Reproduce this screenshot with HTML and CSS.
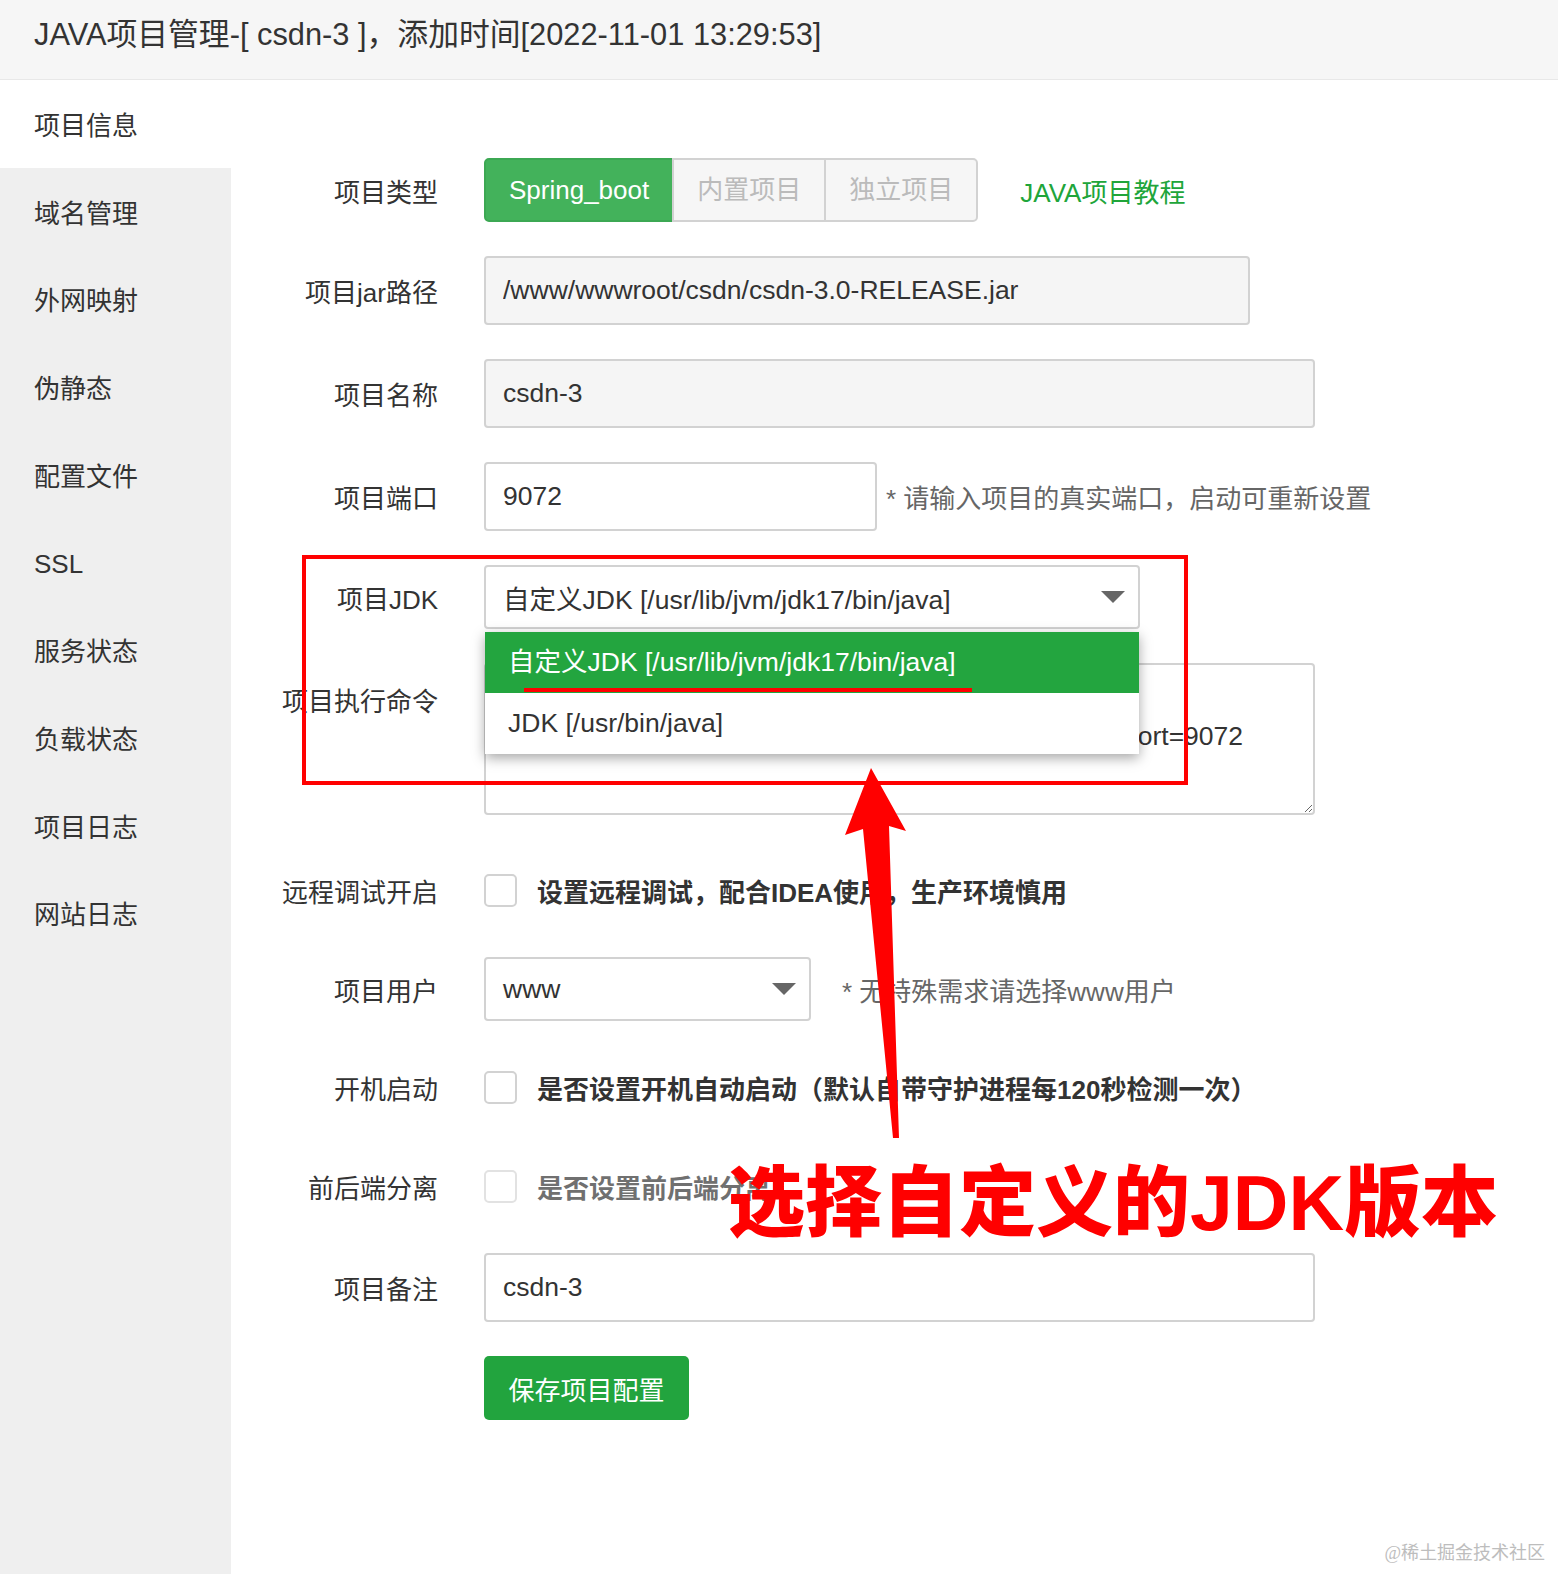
FILE: index.html
```html
<!DOCTYPE html>
<html lang="zh-CN">
<head>
    <meta charset="UTF-8">
    <meta name="viewport" content="width=device-width, initial-scale=1.0">
    <title>JAVA项目管理</title>
    <link rel="stylesheet" href="styles.css">
</head>
<body>
<div class="page">
    <div class="header">JAVA项目管理-[ csdn-3 ]，添加时间[2022-11-01 13:29:53]</div>

    <div class="layout">
        <ul class="sidebar">
            <li class="active">项目信息</li>
            <li>域名管理</li>
            <li>外网映射</li>
            <li>伪静态</li>
            <li>配置文件</li>
            <li>SSL</li>
            <li>服务状态</li>
            <li>负载状态</li>
            <li>项目日志</li>
            <li>网站日志</li>
        </ul>

        <div class="main">
            <div class="row">
                <span class="row-label">项目类型</span>
                <div class="btn-group">
                    <span class="type-btn active">Spring_boot</span>
                    <span class="type-btn">内置项目</span>
                    <span class="type-btn">独立项目</span>
                </div>
                <a class="tutorial" href="#">JAVA项目教程</a>
            </div>

            <div class="row">
                <span class="row-label">项目jar路径</span>
                <input class="text-input readonly jar-input" type="text" value="/www/wwwroot/csdn/csdn-3.0-RELEASE.jar" readonly>
            </div>

            <div class="row">
                <span class="row-label">项目名称</span>
                <input class="text-input readonly wide-input" type="text" value="csdn-3" readonly>
            </div>

            <div class="row">
                <span class="row-label">项目端口</span>
                <input class="text-input port-input" type="text" value="9072">
                <span class="hint port-hint">* 请输入项目的真实端口，启动可重新设置</span>
            </div>

            <div class="row">
                <span class="row-label">项目JDK</span>
                <div class="select jdk-select">
                    <span>自定义JDK [/usr/lib/jvm/jdk17/bin/java]</span>
                    <svg class="caret" width="24" height="12" viewBox="0 0 24 12"><path d="M0 0h24L12 12z" fill="#666"/></svg>
                    <ul class="select-menu">
                        <li class="selected">自定义JDK [/usr/lib/jvm/jdk17/bin/java]</li>
                        <li>JDK [/usr/bin/java]</li>
                    </ul>
                </div>
            </div>

            <div class="row row-top">
                <span class="row-label">项目执行命令</span>
                <textarea class="cmd-input">/usr/lib/jvm/jdk17/bin/java -jar -Xmx1024M -Xms256M /www/wwwroot/csdn/csdn-3.0-RELEASE.jar --server.port=9072</textarea>
            </div>

            <div class="row check-row">
                <span class="row-label">远程调试开启</span>
                <span class="checkbox"></span>
                <span class="check-text">设置远程调试，配合IDEA使用，生产环境慎用</span>
            </div>

            <div class="row">
                <span class="row-label">项目用户</span>
                <div class="select user-select">
                    <span>www</span>
                    <svg class="caret" width="24" height="12" viewBox="0 0 24 12"><path d="M0 0h24L12 12z" fill="#666"/></svg>
                </div>
                <span class="hint user-hint">* 无特殊需求请选择www用户</span>
            </div>

            <div class="row check-row">
                <span class="row-label">开机启动</span>
                <span class="checkbox"></span>
                <span class="check-text">是否设置开机自动启动（默认自带守护进程每120秒检测一次）</span>
            </div>

            <div class="row check-row">
                <span class="row-label">前后端分离</span>
                <span class="checkbox disabled"></span>
                <span class="check-text disabled">是否设置前后端分离</span>
            </div>

            <div class="row">
                <span class="row-label">项目备注</span>
                <input class="text-input wide-input" type="text" value="csdn-3">
            </div>

            <div class="row">
                <span class="row-label"></span>
                <button class="save-btn" type="button">保存项目配置</button>
            </div>
        </div>
    </div>

    <!-- screenshot annotations -->
    <svg class="annotations" width="1558" height="1574" viewBox="0 0 1558 1574">
        <rect x="304" y="557" width="882" height="226" fill="none" stroke="#ff0000" stroke-width="4"/>
        <rect x="524" y="688" width="448" height="4" fill="#ff0000"/>
        <polygon points="871,768 906,831 889,826 899,1138 893,1138 863,829 845,835" fill="#ff0000"/>
    </svg>
    <div class="callout">选择自定义的JDK版本</div>
    <div class="watermark">@稀土掘金技术社区</div>
</div>
</body>
</html>
```

FILE: styles.css
```css
body {
    margin: 0;
    font-family: "Liberation Sans", "Noto Sans CJK SC", sans-serif;
    color: #333;
    background-color: #fff;
}

.page {
    position: relative;
    min-height: 1574px;
    display: flex;
    flex-direction: column;
    overflow: hidden;
}

.header {
    height: 79px;
    padding-left: 34px;
    font-size: 30.8px;
    line-height: 70px;
    background-color: #f6f6f6;
    border-bottom: 1px solid #e8e8e8;
}

.layout {
    display: flex;
    flex: 1;
}

.sidebar {
    width: 231px;
    margin: 0;
    padding: 0;
    list-style: none;
    background-color: #efefef;
    flex-shrink: 0;
}

.sidebar li {
    height: 87.7px;
    box-sizing: border-box;
    padding: 6px 0 0 34px;
    line-height: 81.7px;
    font-size: 26px;
}

.sidebar li.active {
    background-color: #fff;
}

.main {
    flex: 1;
    padding-top: 78px;
    display: flex;
    flex-direction: column;
    gap: 34px;
}

.row {
    display: flex;
    align-items: center;
}

.row-top {
    align-items: flex-start;
    margin-bottom: 9px;
}

.row-label {
    width: 207px;
    margin-right: 46px;
    flex-shrink: 0;
    text-align: right;
    font-size: 26px;
}

.row-top .row-label {
    line-height: 78px;
}

.btn-group {
    display: flex;
}

.type-btn {
    height: 64px;
    box-sizing: border-box;
    padding: 0 23px;
    line-height: 60px;
    font-size: 26px;
    color: #bbb;
    background-color: #f6f6f6;
    border: 2px solid #d2d2d2;
    margin-left: -2px;
}

.type-btn:first-child {
    margin-left: 0;
    border-radius: 5px 0 0 5px;
}

.type-btn:last-child {
    border-radius: 0 5px 5px 0;
}

.type-btn.active {
    color: #fff;
    background-color: #43b25b;
    border-color: #3ca853;
}

.tutorial {
    margin-left: 42px;
    font-size: 26px;
    color: #20a53a;
    text-decoration: none;
}

.text-input {
    height: 69px;
    box-sizing: border-box;
    padding: 0 17px;
    font-family: inherit;
    font-size: 26.5px;
    color: #333;
    border: 2px solid #d2d2d2;
    border-radius: 4px;
    background-color: #fff;
    outline: none;
}

.text-input.readonly {
    background-color: #f5f5f5;
}

.jar-input {
    width: 766px;
}

.wide-input {
    width: 831px;
}

.port-input {
    width: 393px;
}

.hint {
    font-size: 26px;
    color: #666;
}

.port-hint {
    margin-left: 9px;
}

.user-hint {
    margin-left: 31px;
}

.select {
    position: relative;
    height: 64px;
    box-sizing: border-box;
    padding: 0 13px 0 17px;
    display: flex;
    align-items: center;
    justify-content: space-between;
    font-size: 26.5px;
    border: 2px solid #d2d2d2;
    border-radius: 4px;
    background-color: #fff;
}

.jdk-select {
    width: 656px;
}

.user-select {
    width: 327px;
}

.select-menu {
    position: absolute;
    top: 65px;
    left: -1px;
    right: -1px;
    margin: 0;
    padding: 0;
    list-style: none;
    background-color: #fff;
    box-shadow: 0 4px 12px rgba(0, 0, 0, 0.35);
    z-index: 2;
}

.select-menu li {
    height: 61px;
    line-height: 61px;
    padding-left: 23px;
    font-size: 26.5px;
    color: #333;
}

.select-menu li.selected {
    color: #fff;
    background-color: #23a53f;
}

.cmd-input {
    width: 831px;
    height: 152px;
    box-sizing: border-box;
    padding: 5px 17px 0;
    font-family: inherit;
    font-size: 26.5px;
    line-height: 44px;
    color: #333;
    border: 2px solid #d2d2d2;
    border-radius: 4px;
    resize: both;
    outline: none;
}

.check-row {
    height: 65px;
}

.checkbox {
    width: 33px;
    height: 33px;
    box-sizing: border-box;
    margin-right: 20px;
    border: 2px solid #d2d2d2;
    border-radius: 5px;
    background-color: #fff;
}

.checkbox.disabled {
    border-color: #e2e2e2;
}

.check-text {
    font-size: 26px;
    font-weight: bold;
    color: #333;
}

.check-text.disabled {
    color: #707070;
}

.save-btn {
    width: 205px;
    height: 64px;
    font-family: inherit;
    font-size: 26px;
    color: #fff;
    background-color: #22a43e;
    border: none;
    border-radius: 5px;
    cursor: pointer;
}

.annotations {
    position: absolute;
    left: 0;
    top: 0;
    pointer-events: none;
    z-index: 5;
}

.callout {
    position: absolute;
    left: 728px;
    top: 1165px;
    font-size: 77px;
    line-height: 77px;
    font-weight: 900;
    color: #ff0000;
    white-space: nowrap;
    z-index: 6;
}

.watermark {
    position: absolute;
    right: 13px;
    bottom: 10px;
    font-family: "Liberation Serif", "Noto Sans CJK SC", serif;
    font-size: 18px;
    color: #bdbdbd;
}
```
